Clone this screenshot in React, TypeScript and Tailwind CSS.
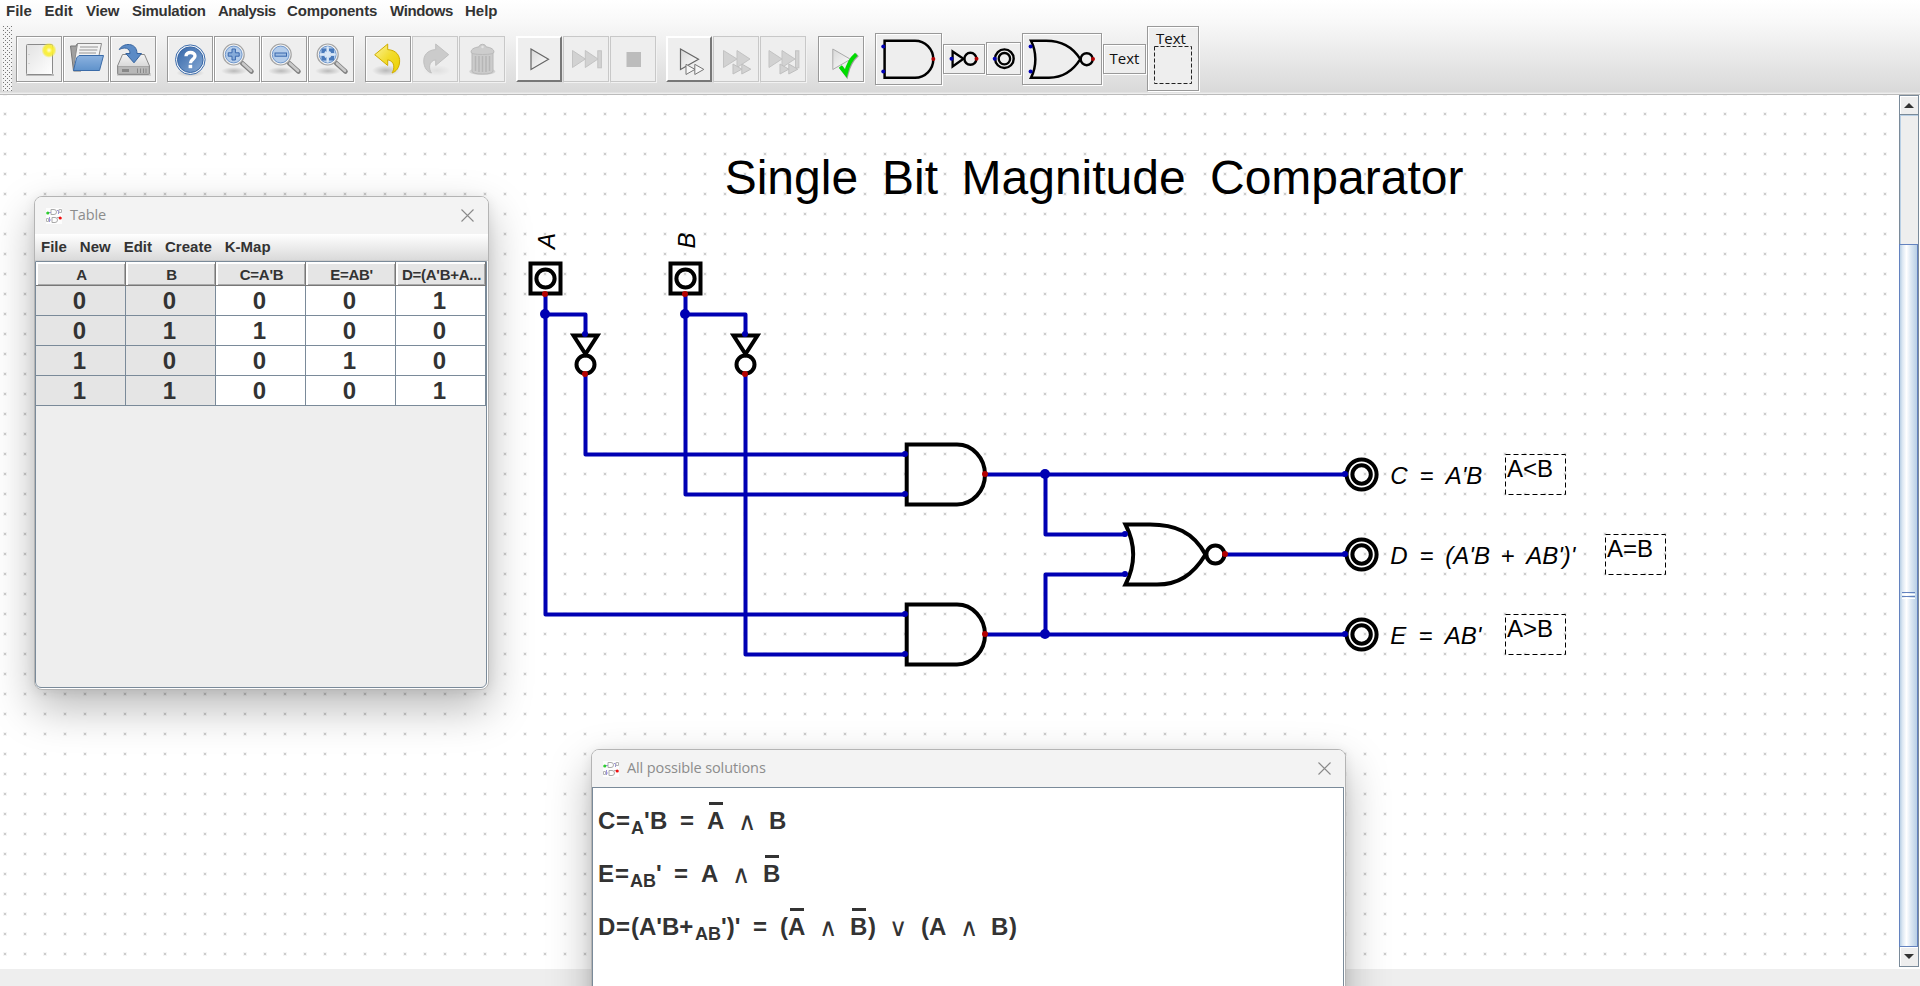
import React from "react";

const BLUE = "#0000b3";
const RED = "#b30000";

/* ---------- toolbar ---------- */

type Kind = "normal" | "disabled" | "raised";

const frames: Record<Kind, string> = {
  normal: "border border-[#999] shadow-[1px_1px_0_#fff,inset_1px_1px_0_#fff]",
  disabled: "border border-[#c8c8c8] shadow-[1px_1px_0_#f2f2f2]",
  raised: "border-2 border-t-white border-l-white border-r-[#777] border-b-[#777]",
};

function Tool({ kind = "normal", children }: { kind?: Kind; children: React.ReactNode }) {
  return (
    <div className={`flex h-[46px] w-[46px] shrink-0 items-center justify-center bg-[#eee] ${frames[kind]}`}>
      <svg className="h-11 w-11 shrink-0" viewBox="1 1 44 44">
        {children}
      </svg>
    </div>
  );
}

function Defs() {
  return (
    <svg className="absolute h-0 w-0">
      <defs>
        <linearGradient id="paper" x1="0" y1="0" x2="1" y2="1">
          <stop offset="0" stopColor="#e2e2e2" />
          <stop offset="1" stopColor="#ffffff" />
        </linearGradient>
        <radialGradient id="sun">
          <stop offset="0" stopColor="#ffffe0" />
          <stop offset="0.4" stopColor="#fbf03a" />
          <stop offset="0.7" stopColor="#f7ec30" stopOpacity="0.85" />
          <stop offset="1" stopColor="#f7ec30" stopOpacity="0" />
        </radialGradient>
        <linearGradient id="folder" x1="0" y1="0" x2="0" y2="1">
          <stop offset="0" stopColor="#8cb2df" />
          <stop offset="1" stopColor="#5f92cb" />
        </linearGradient>
        <linearGradient id="metal" x1="0" y1="0" x2="0" y2="1">
          <stop offset="0" stopColor="#f4f4f4" />
          <stop offset="1" stopColor="#c6c6c6" />
        </linearGradient>
        <linearGradient id="help" x1="0" y1="0" x2="1" y2="1">
          <stop offset="0" stopColor="#3566a8" />
          <stop offset="1" stopColor="#86a9d4" />
        </linearGradient>
        <linearGradient id="gold" x1="0" y1="0" x2="1" y2="1">
          <stop offset="0" stopColor="#fbf3a0" />
          <stop offset="0.5" stopColor="#f2dc2c" />
          <stop offset="1" stopColor="#ecd000" />
        </linearGradient>
        <radialGradient id="soft">
          <stop offset="0" stopColor="#000" stopOpacity="0.22" />
          <stop offset="1" stopColor="#000" stopOpacity="0" />
        </radialGradient>
        <linearGradient id="tri" x1="0" y1="0" x2="1" y2="1">
          <stop offset="0" stopColor="#d8d8d8" />
          <stop offset="1" stopColor="#ffffff" />
        </linearGradient>
      </defs>
    </svg>
  );
}

function Lens({ children }: { children: React.ReactNode }) {
  return (
    <>
      <ellipse cx="20" cy="35" rx="13" ry="4" fill="url(#soft)" />
      <path d="M28 27 L37.5 35.5" stroke="#808080" strokeWidth="4.6" strokeLinecap="round" />
      <path d="M29 27.5 L37 34.8" stroke="#cacaca" strokeWidth="2.6" strokeLinecap="round" />
      <circle cx="19.7" cy="18.5" r="10.5" fill="#f4f4f4" stroke="#a4a4a4" strokeWidth="1.2" />
      <circle cx="19.7" cy="18.5" r="8.4" fill="#b5cdea" stroke="#6f97cc" strokeWidth="1" />
      {children}
    </>
  );
}

const undoPath =
  "M9.7 18.7 L22.7 8 V13.6 C31 14 35.2 19.5 34.6 26 C34.2 31.5 31.5 35.5 27 37 C30 32.5 29.8 25 22.7 23.8 V29.5 Z";

function PartButton({ w, h, children }: { w: string; h: string; children: React.ReactNode }) {
  return (
    <div
      className={`${w} ${h} flex shrink-0 items-center justify-center border border-[#999] bg-[#eee] shadow-[1px_1px_0_#fff,inset_1px_1px_0_#fff]`}
    >
      {children}
    </div>
  );
}

function Dot({ x, y, c, r = 2 }: { x: number; y: number; c: string; r?: number }) {
  return <circle cx={x} cy={y} r={r} fill={c} />;
}

function Toolbar() {
  return (
    <div className="flex h-[65px] items-center pl-[2px]">
      <svg className="h-[65px] w-[11px] shrink-0">
        <defs>
          <pattern id="grip" width="4" height="4" patternUnits="userSpaceOnUse">
            <rect width="4" height="4" fill="#f4f4f4" />
            <rect x="1" y="0" width="1" height="1" fill="#777" />
            <rect x="3" y="2" width="1" height="1" fill="#777" />
          </pattern>
        </defs>
        <rect width="10" height="65" fill="url(#grip)" />
      </svg>
      <div className="ml-[3px] flex items-center gap-px">
        <Tool>
          <rect x="10" y="38" width="28" height="2" fill="#000" opacity="0.2" />
          <rect x="10.5" y="8.5" width="26" height="30" rx="1" fill="url(#paper)" stroke="#8a8a8a" />
          <path d="M13 18 v1 M13 27 v1" stroke="#bbb" />
          <circle cx="33" cy="14.3" r="7.6" fill="url(#sun)" />
        </Tool>
        <Tool>
          <path d="M7.5 10 H13 L14 8 H18 V35 H10.5 Z" fill="#a0a0a0" stroke="#777" />
          <path d="M14.5 7.5 H38.5 L34 29 H11 Z" fill="#f3f3f3" stroke="#8a8a8a" />
          <path d="M17 11 H35 M16.3 14 H34.3 M16 17 H33" stroke="#b5b5b5" strokeWidth="1.3" />
          <path d="M16 19.5 H40.5 L36.5 34.5 H10.5 L13.5 22 Z" fill="url(#folder)" stroke="#3a6ba8" />
        </Tool>
        <Tool>
          <rect x="7" y="37" width="34" height="3" fill="#000" opacity="0.12" />
          <path d="M12.5 18.5 H34.5 L39.5 30 V37.5 Q39.5 38.5 38.5 38.5 H8.5 Q7.5 38.5 7.5 37.5 V30 Z" fill="url(#metal)" stroke="#888" />
          <path d="M8 30.5 H39 V37 Q39 38 38 38 H9 Q8 38 8 37 Z" fill="#b8b8b8" stroke="#999" strokeWidth="0.7" />
          <path d="M12 34.5 H19" stroke="#888" strokeWidth="3" />
          <path d="M27.5 32.5 V37 M30.5 32.5 V37 M33.5 32.5 V37 M36 32.5 V37" stroke="#8a8a8a" strokeWidth="1" />
          <path d="M9.3 13.5 C13 6.5 27 6 27 17.5 H31.5 L24 26.8 L15.8 17.5 H20 C20 11.5 14 11 9.3 13.5 Z" fill="#5b8bc6" stroke="#35639f" />
        </Tool>
      </div>
      <div className="ml-[11px] flex items-center gap-px">
        <Tool>
          <ellipse cx="23.3" cy="37" rx="14" ry="4" fill="url(#soft)" />
          <circle cx="23.3" cy="23.7" r="14.8" fill="#f2f5f9" stroke="#3d6cab" />
          <circle cx="23.3" cy="23.7" r="12.8" fill="url(#help)" stroke="#3766a6" />
          <path d="M19 20.3 C19 15.3 28 15.2 28 20 C28 23.4 23.4 23.3 23.4 27.2" fill="none" stroke="#fff" strokeWidth="3.4" />
          <rect x="21.6" y="28.8" width="3.6" height="3.4" fill="#fff" />
        </Tool>
        <Tool>
          <Lens>
            <path d="M18 13 h3.4 v3.8 h3.8 v3.4 h-3.8 v3.8 h-3.4 v-3.8 h-3.8 v-3.4 h3.8 z" fill="#86abd9" stroke="#3a69ae" />
          </Lens>
        </Tool>
        <Tool>
          <Lens>
            <rect x="14" y="17" width="11.5" height="3.2" fill="#9dbce3" stroke="#3a69ae" />
          </Lens>
        </Tool>
        <Tool>
          <Lens>
            <path d="M13.5 12.5 h5 v4.6 h-5 z M21 12.5 h5 v4.6 h-5 z M13.5 20 h5 v4.6 h-5 z M21 20 h5 v4.6 h-5 z" fill="#4a7abb" />
            <path d="M19.7 10.5 V26.5 M11.7 18.5 H27.7" stroke="#dbe8f6" strokeWidth="2" />
            <path d="M17 15.8 l5.4 5.4 M22.4 15.8 l-5.4 5.4" stroke="#dbe8f6" strokeWidth="2" />
          </Lens>
        </Tool>
      </div>
      <div className="ml-[11px] flex items-center gap-px">
        <Tool>
          <ellipse cx="21" cy="34.5" rx="14" ry="5.5" fill="url(#soft)" />
          <path d={undoPath} fill="url(#gold)" stroke="#d0ac00" strokeLinejoin="round" />
        </Tool>
        <Tool kind="disabled">
          <ellipse cx="25" cy="34.5" rx="14" ry="5.5" fill="url(#soft)" opacity="0.3" />
          <path d={undoPath} transform="translate(46.4 0) scale(-1 1)" fill="#cbcbcb" stroke="#c0c0c0" strokeLinejoin="round" />
        </Tool>
        <Tool kind="disabled">
          <ellipse cx="23.3" cy="35.5" rx="13" ry="3.5" fill="#d2d2d2" />
          <path d="M13 16 H34 V35 Q34 38 23.5 38 Q13 38 13 35 Z" fill="#cbcbcb" stroke="#b8b8b8" />
          <path d="M16.5 20 V35 M20 20 V36 M23.5 20 V36 M27 20 V36 M30.5 20 V35" stroke="#b6b6b6" strokeWidth="1.5" />
          <path d="M12 16 Q12 12 20 10.8 Q20.5 8.3 23.5 8.3 Q26.5 8.3 27 10.8 Q35 12 35 16 Q35 18.5 23.5 18.5 Q12 18.5 12 16 Z" fill="#cdcdcd" stroke="#bababa" />
          <circle cx="23.5" cy="11" r="1.2" fill="#e4e4e4" />
        </Tool>
      </div>
      <div className="ml-[11px] flex items-center gap-px">
        <Tool kind="raised">
          <path d="M15 13 L32.5 23.3 L15 33.5 Z" fill="url(#tri)" stroke="#666" strokeWidth="1.2" />
        </Tool>
        <Tool kind="disabled">
          <path d="M9.5 14.5 L22.3 23 L9.5 31.5 Z M22.3 14.5 L35 23 L22.3 31.5 Z" fill="#d2d2d2" stroke="#c3c3c3" />
          <rect x="34.8" y="14.8" width="3.6" height="17" fill="#d2d2d2" stroke="#c3c3c3" />
        </Tool>
        <Tool kind="disabled">
          <rect x="16.5" y="16" width="14.5" height="15" fill="#bcbcbc" />
        </Tool>
      </div>
      <div className="ml-[10px] flex items-center gap-px">
        <Tool kind="raised">
          <path d="M14.5 13 L32.5 23.3 L14.5 33.5 Z" fill="url(#tri)" stroke="#666" strokeWidth="1.2" />
          <path d="M20 28.3 L29 33.4 L20 38.5 Z M28.8 28.3 L37.8 33.4 L28.8 38.5 Z" fill="#f6f6f6" stroke="#777" />
        </Tool>
        <Tool kind="disabled">
          <path d="M10.5 14.5 L24 23 L10.5 31.5 Z M24 14.5 L37 23 L24 31.5 Z" fill="#d2d2d2" stroke="#c3c3c3" />
          <path d="M20 28 L28.8 33.2 L20 38 Z M28.8 28 L37.8 33.2 L28.8 38 Z" fill="#d2d2d2" stroke="#bfbfbf" />
        </Tool>
        <Tool kind="disabled">
          <path d="M9 14.5 L22 23 L9 31.5 Z M22 14.5 L35 23 L22 31.5 Z" fill="#d2d2d2" stroke="#c3c3c3" />
          <rect x="35.5" y="14.8" width="3.4" height="17" fill="#d2d2d2" stroke="#c3c3c3" />
          <path d="M20 28 L28.8 33.2 L20 38 Z M28.8 28 L37.8 33.2 L28.8 38 Z" fill="#d2d2d2" stroke="#bfbfbf" />
        </Tool>
      </div>
      <div className="ml-[12px]">
        <Tool>
          <path d="M14.8 13 L32.5 23.3 L14.8 33.5 Z" fill="url(#tri)" stroke="#aaa" />
          <path d="M23 31 L28.5 38.5 C30.5 30 35 22.5 39.5 18.8" fill="none" stroke="#666" strokeWidth="4" opacity="0.6" />
          <path d="M22.3 30.5 L27.8 37.5 C29.5 29.5 34 22 38.3 18.3" fill="none" stroke="#00dc00" strokeWidth="3.8" />
        </Tool>
      </div>
      <div className="ml-[11px] flex items-center gap-px">
        <PartButton w="w-[67px]" h="h-[52px]">
          <svg className="h-[50px] w-[65px]" viewBox="1 1 65 50">
            <path d="M40 7.7 H9.6 V44.7 H40 A18.3 18.5 0 0 0 40 7.7 Z" fill="none" stroke="#000" strokeWidth="2.5" />
            <Dot x={8.3} y={13.5} c={BLUE} />
            <Dot x={8.3} y={38.5} c={BLUE} />
            <Dot x={58.3} y={26} c={RED} />
          </svg>
        </PartButton>
        <PartButton w="w-[42px]" h="h-[30px]">
          <svg className="h-[28px] w-[40px]" viewBox="1 1 40 28">
            <path d="M9.6 7.5 L20.5 14.8 L9.6 22.5 Z" fill="none" stroke="#000" strokeWidth="2.3" />
            <circle cx="27.4" cy="14.8" r="6" fill="none" stroke="#000" strokeWidth="2.4" />
            <Dot x={8.5} y={14.8} c={BLUE} />
            <Dot x={33.5} y={14.8} c={RED} />
          </svg>
        </PartButton>
        <PartButton w="w-[35px]" h="h-[33px]">
          <svg className="h-[31px] w-[33px]" viewBox="1 1 33 31">
            <circle cx="18.4" cy="16.7" r="9.3" fill="none" stroke="#000" strokeWidth="2.4" />
            <circle cx="18.4" cy="16.7" r="5.7" fill="none" stroke="#000" strokeWidth="2.3" />
            <Dot x={8.7} y={16.7} c={BLUE} />
          </svg>
        </PartButton>
        <PartButton w="w-[80px]" h="h-[52px]">
          <svg className="h-[50px] w-[78px]" viewBox="1 1 78 50">
            <path d="M9 7.7 H24 C38 7.7 50 12.5 58.3 26.2 C50 39.5 40 44.7 27 44.7 H9 C14.8 33.5 14.8 19 9 7.7 Z" fill="none" stroke="#000" strokeWidth="2.5" />
            <circle cx="64.7" cy="26.2" r="6" fill="none" stroke="#000" strokeWidth="2.4" />
            <Dot x={8.6} y={13.5} c={BLUE} />
            <Dot x={8.6} y={38.5} c={BLUE} />
            <Dot x={71} y={26} c={RED} />
          </svg>
        </PartButton>
        <PartButton w="w-[43px]" h="h-[30px]">
          <span className="font-['Open_Sans',sans-serif] text-[15px] leading-none text-[#111]">Text</span>
        </PartButton>
        <PartButton w="w-[52px]" h="h-[65px]">
          <div className="flex h-full w-full flex-col pl-[6px] pt-[3px]">
            <span className="h-[15px] pl-[2px] font-['Open_Sans',sans-serif] text-[15px] leading-[16px] text-[#111]">Text</span>
            <svg className="h-[40px] w-[40px]">
              <rect x="0.5" y="1.5" width="37" height="37" fill="none" stroke="#222" strokeDasharray="4 2" />
            </svg>
          </div>
        </PartButton>
      </div>
    </div>
  );
}

/* ---------- schematic ---------- */

function Inverter({ x }: { x: number }) {
  return (
    <g>
      <path d={`M${x - 12} 335.5 H${x + 12} L${x} 354 Z`} fill="none" stroke="#000" strokeWidth="4" />
      <circle cx={x} cy="364.5" r="9" fill="none" stroke="#000" strokeWidth="4" />
      <Dot x={x - 0.5} y={334} c={BLUE} r={3} />
      <Dot x={x - 0.5} y={374} c={RED} r={3} />
    </g>
  );
}

function Input({ x }: { x: number }) {
  return (
    <g>
      <rect x={x - 15} y="263.5" width="30" height="30" fill="none" stroke="#000" strokeWidth="4" />
      <circle cx={x} cy="278.5" r="9.1" fill="none" stroke="#000" strokeWidth="4" />
      <Dot x={x - 0.5} y={294} c={RED} r={3} />
      <Dot x={x - 0.5} y={314} c={BLUE} r={5} />
    </g>
  );
}

function And({ y }: { y: number }) {
  return (
    <g>
      <path
        d={`M957 ${y - 30} H906.7 V${y + 30} H957 A28 30 0 0 0 957 ${y - 30} Z`}
        fill="none"
        stroke="#000"
        strokeWidth="4"
      />
      <Dot x={905} y={y - 20.5} c={BLUE} r={3} />
      <Dot x={905} y={y + 19.5} c={BLUE} r={3} />
      <Dot x={985} y={y - 0.5} c={RED} r={3} />
    </g>
  );
}

function Output({ y }: { y: number }) {
  return (
    <g>
      <circle cx="1361.6" cy={y} r="15" fill="none" stroke="#000" strokeWidth="4" />
      <circle cx="1361.6" cy={y} r="9.2" fill="none" stroke="#000" strokeWidth="4" />
      <Dot x={1345} y={y - 0.5} c={BLUE} r={3} />
    </g>
  );
}

function BoxedText({ x, y, children }: { x: number; y: number; children: string }) {
  return (
    <g>
      <rect x={x + 0.5} y={y + 0.5} width="60" height="40" fill="none" stroke="#000" strokeDasharray="5 3" />
      <text x={x + 2} y={y + 23} fontSize="24">
        {children}
      </text>
    </g>
  );
}

function Schematic() {
  return (
    <svg className="h-[874px] w-[1899px] shrink-0 font-['Liberation_Sans',sans-serif]" viewBox="0 95 1899 874">
      <defs>
        <pattern id="dots" x="-5" y="4" width="20" height="20" patternUnits="userSpaceOnUse">
          <rect x="8" y="8" width="4" height="4" fill="#f5f5f5" />
          <rect x="9" y="9" width="2" height="2" fill="#ccc" />
        </pattern>
      </defs>
      <rect y="95" width="1899" height="874" fill="url(#dots)" />
      <g fontSize="48" fill="#000">
        <text y="194">
          <tspan x="724.7">Single </tspan>
          <tspan x="882">Bit </tspan>
          <tspan x="961.5">Magnitude </tspan>
          <tspan x="1210">Comparator</tspan>
        </text>
      </g>
      <g fill="none" stroke={BLUE} strokeWidth="4" strokeLinejoin="round" strokeLinecap="round">
        <path d="M545.5 294 V614.5 H905 M545.5 314.5 H585.5 V334 M585.5 374 V454.5 H905" />
        <path d="M685.5 294 V494.5 H905 M685.5 314.5 H745.5 V334 M745.5 374 V654.5 H905" />
        <path d="M985 474.5 H1345 M1045.5 474.5 V534.5 H1125" />
        <path d="M985 634.5 H1345 M1045.5 634.5 V574.5 H1125 M1225 554.5 H1345" />
      </g>
      <Input x={545.5} />
      <Input x={685.5} />
      <Inverter x={585.5} />
      <Inverter x={745.5} />
      <And y={474.5} />
      <And y={634.5} />
      <Dot x={1045} y={474} c={BLUE} r={5} />
      <Dot x={1045} y={634} c={BLUE} r={5} />
      <path
        d="M1125.5 524.5 H1150 C1175 524.5 1193 532 1205.5 554.5 C1193 575 1178 584.5 1157 584.5 H1125.5 C1135.5 565 1135.5 544 1125.5 524.5 Z"
        fill="none"
        stroke="#000"
        strokeWidth="4"
      />
      <circle cx="1215.4" cy="554.5" r="9" fill="none" stroke="#000" strokeWidth="4" />
      <Dot x={1125} y={534} c={BLUE} r={3} />
      <Dot x={1125} y={574} c={BLUE} r={3} />
      <Dot x={1225} y={554} c={RED} r={3} />
      <Output y={474.5} />
      <Output y={554.5} />
      <Output y={634.5} />
      <g fontSize="24" fontStyle="italic" fill="#000">
        <text transform="translate(555 249) rotate(-90)">A</text>
        <text transform="translate(695 248.5) rotate(-90)">B</text>
        <text y="484">
          <tspan x="1390.3">C </tspan>
          <tspan x="1419.5">= </tspan>
          <tspan x="1445.7">A'B</tspan>
        </text>
        <text y="564">
          <tspan x="1390.3">D </tspan>
          <tspan x="1419.5">= </tspan>
          <tspan x="1445.3">(A'B </tspan>
          <tspan x="1500.5">+ </tspan>
          <tspan x="1526.2">AB')'</tspan>
        </text>
        <text y="644">
          <tspan x="1390.3">E </tspan>
          <tspan x="1418.5">= </tspan>
          <tspan x="1444.7">AB'</tspan>
        </text>
      </g>
      <BoxedText x={1505} y={454}>{"A<B"}</BoxedText>
      <BoxedText x={1605} y={534}>{"A=B"}</BoxedText>
      <BoxedText x={1505} y={614}>{"A>B"}</BoxedText>
    </svg>
  );
}

function ScrollBar() {
  return (
    <div className="flex h-[872px] w-5 flex-col border border-[#7a8a99] bg-[#eee]">
      <div className="flex h-[19px] shrink-0 items-center justify-center border-b border-[#7a8a99] shadow-[inset_1px_1px_0_#fff]">
        <svg className="h-[5px] w-[10px]">
          <path d="M0 5 L5 0 L10 5 Z" fill="#333" />
        </svg>
      </div>
      <div className="h-[129px] shrink-0 border-l border-t border-[#b8cfe5]" />
      <div className="-ml-px flex flex-1 items-center justify-center border border-[#6382bf] bg-[linear-gradient(90deg,#b8cfe5_0,#dde8f3_15%,#fff_38%,#dbe7f3_65%,#b8cfe5_100%)]">
        <div className="flex w-[13px] flex-col gap-px">
          <div className="h-px bg-[#6382bf]" />
          <div className="h-px bg-white" />
          <div className="h-px bg-[#6382bf]" />
          <div className="h-px bg-white" />
        </div>
      </div>
      <div className="flex h-[19px] shrink-0 items-center justify-center shadow-[inset_1px_1px_0_#fff]">
        <svg className="h-[5px] w-[10px]">
          <path d="M0 0 L5 5 L10 0 Z" fill="#333" />
        </svg>
      </div>
    </div>
  );
}

/* ---------- windows ---------- */

function TitleBar({ title }: { title: string }) {
  return (
    <div className="flex h-[37px] shrink-0 items-center bg-[#f3f3f3] pl-[11px] pr-[14px]">
      <svg className="h-4 w-4" viewBox="0 0 16 16">
        <rect width="16" height="16" fill="#fff" opacity="0.8" />
        <path d="M5 1.5 H8 Q10.5 1.5 10.5 4 Q10.5 6.5 8 6.5 H5 Z M6 9.5 H9 Q11.5 9.5 11.5 12 Q11.5 14.5 9 14.5 H6 Z" fill="none" stroke="#aaa" />
        <path d="M2 4.5 H5 M11 2.5 H12.5 V6 M2 12 H5 M3.5 9 V14" fill="none" stroke="#9a92dc" />
        <path d="M13 1.5 H15.5 V4.5 H13 Z M0.5 10.5 H2.5 V13.5 H0.5 Z M11 9.5 H14" fill="none" stroke="#b4b4b4" />
        <circle cx="1.8" cy="5" r="1.6" fill="#2ecc2e" />
        <circle cx="14.2" cy="10" r="1.6" fill="#f01010" />
      </svg>
      <span className="ml-2 font-['Open_Sans',sans-serif] text-[14.5px] leading-none tracking-[-0.12px] text-[#8c8c8c]">{title}</span>
      <svg className="ml-auto h-[13px] w-[13px]" viewBox="0 0 13 13">
        <path d="M0.5 0.5 L12.5 12.5 M12.5 0.5 L0.5 12.5" stroke="#8a8a8a" strokeWidth="1.1" />
      </svg>
    </div>
  );
}

const headers = ["A", "B", "C=A'B", "E=AB'", "D=(A'B+A..."];
const rows = ["00001", "01100", "10010", "11001"];

function TableWindow() {
  return (
    <div className="absolute left-[34px] top-[196px] flex h-[494px] w-[455px] flex-col overflow-hidden rounded-lg border border-[#b4b4b4] bg-white shadow-[0_18px_44px_rgba(0,0,0,0.28),0_2px_12px_rgba(0,0,0,0.08)]">
      <TitleBar title="Table" />
      <div className="flex h-[27px] shrink-0 gap-[13px] border-b border-[#ccc] bg-gradient-to-b from-white to-[#dadada] pl-[6px] text-[15px] font-bold leading-[25px] text-[#333]">
        <span>File</span>
        <span>New</span>
        <span>Edit</span>
        <span>Create</span>
        <span>K-Map</span>
      </div>
      <div className="mr-px mb-px flex flex-1 flex-col rounded-b-md border border-[#7a8a99] bg-[#eee] text-[#333]">
        <div className="grid h-6 shrink-0 grid-cols-[repeat(5,90px)] border-b border-[#777]">
          {headers.map((h) => (
            <div
              key={h}
              className="flex items-center justify-center whitespace-nowrap border-r border-[#777] bg-[#e5e5e5] pl-[2px] pt-px text-[15px] font-bold leading-none tracking-[-0.25px] shadow-[inset_2px_2px_0_#fff,inset_-1px_-1px_0_#aaa]"
            >
              {h}
            </div>
          ))}
        </div>
        {rows.map((r) => (
          <div key={r} className="grid h-[30px] shrink-0 grid-cols-[repeat(5,90px)]">
            {r.split("").map((v, i) => (
              <div
                key={i}
                className={`flex items-center justify-center border-b border-r border-[#7a8a99] pr-[2px] text-[24px] font-bold leading-none ${i < 2 ? "bg-[#e5e5e5]" : "bg-white"}`}
              >
                {v}
              </div>
            ))}
          </div>
        ))}
      </div>
    </div>
  );
}

type Token = { t: string; w: string; k?: "sub" | "bar" | "op" };

const formulas: Token[][] = [
  [
    { t: "C", w: "w-[18px]" },
    { t: "=", w: "w-[15px]" },
    { t: "A", w: "w-[13px]", k: "sub" },
    { t: "'", w: "w-[6px]" },
    { t: "B", w: "w-[30px]" },
    { t: "=", w: "w-[27px]" },
    { t: "A", w: "w-[31px]", k: "bar" },
    { t: "∧", w: "w-[31px]", k: "op" },
    { t: "B", w: "w-[18px]" },
  ],
  [
    { t: "E", w: "w-[17px]" },
    { t: "=", w: "w-[15px]" },
    { t: "AB", w: "w-[26px]", k: "sub" },
    { t: "'", w: "w-[18px]" },
    { t: "=", w: "w-[27px]" },
    { t: "A", w: "w-[31px]" },
    { t: "∧", w: "w-[31px]", k: "op" },
    { t: "B", w: "w-[18px]", k: "bar" },
  ],
  [
    { t: "D", w: "w-[18px]" },
    { t: "=", w: "w-[15px]" },
    { t: "(A'B+", w: "w-[64px]" },
    { t: "AB", w: "w-[26px]", k: "sub" },
    { t: "')'", w: "w-[32px]" },
    { t: "=", w: "w-[27px]" },
    { t: "(", w: "w-[8px]" },
    { t: "A", w: "w-[31px]", k: "bar" },
    { t: "∧", w: "w-[31px]", k: "op" },
    { t: "B", w: "w-[18px]", k: "bar" },
    { t: ")", w: "w-[21px]" },
    { t: "∨", w: "w-[32px]", k: "op" },
    { t: "(", w: "w-[8px]" },
    { t: "A", w: "w-[31px]" },
    { t: "∧", w: "w-[31px]", k: "op" },
    { t: "B", w: "w-[18px]" },
    { t: ")", w: "w-[8px]" },
  ],
];

function Formula({ tokens }: { tokens: Token[] }) {
  return (
    <div className="flex h-[53px] items-center whitespace-nowrap text-[24px] font-bold leading-[28px] text-[#333]">
      {tokens.map((k, i) => (
        <span key={i} className={`${k.w} shrink-0`}>
          {k.k === "sub" && <span className="block pt-[15px] text-[18px]">{k.t}</span>}
          {k.k === "op" && <span className="block pt-[2px] font-['DejaVu_Sans',sans-serif] text-[25px] font-normal">{k.t}</span>}
          {k.k === "bar" && (
            <span className="relative">
              {k.t}
              <span className="absolute left-[2px] top-[-5px] h-[3px] w-[14px] bg-[#333]" />
            </span>
          )}
          {!k.k && k.t}
        </span>
      ))}
    </div>
  );
}

function SolutionsWindow() {
  return (
    <div className="absolute left-[591px] top-[749px] flex h-[300px] w-[755px] flex-col overflow-hidden rounded-t-lg border border-[#b4b4b4] bg-white shadow-[0_18px_44px_rgba(0,0,0,0.28),0_2px_12px_rgba(0,0,0,0.08)]">
      <TitleBar title="All possible solutions" />
      <div className="mr-px flex flex-1 flex-col border border-[#7a8a99] bg-white pl-[5px] pt-[6px]">
        {formulas.map((f, i) => (
          <Formula key={i} tokens={f} />
        ))}
      </div>
    </div>
  );
}

export default function App() {
  return (
    <div className="relative flex h-[986px] w-[1920px] flex-col overflow-hidden bg-[#eee] font-['Liberation_Sans',Arial,sans-serif]">
      <Defs />
      <header className="flex h-[95px] shrink-0 flex-col border-b border-[#bbb] bg-[linear-gradient(180deg,#fff_0,#f8f8f8_25%,#d9d9d9_98%,#eee_99%)]">
        <nav className="flex h-[26px] shrink-0 pl-[6px] text-[15px] font-bold leading-[22px] text-[#333]">
          <span className="w-[38.5px]">File</span>
          <span className="w-[41.5px]">Edit</span>
          <span className="w-[46px] tracking-[-0.2px]">View</span>
          <span className="w-[86px] tracking-[-0.3px]">Simulation</span>
          <span className="w-[69px] tracking-[-0.5px]">Analysis</span>
          <span className="w-[103px] tracking-[-0.15px]">Components</span>
          <span className="w-[75px] tracking-[-0.4px]">Windows</span>
          <span>Help</span>
        </nav>
        <Toolbar />
      </header>
      <main className="flex h-[874px] shrink-0 bg-white">
        <Schematic />
        <ScrollBar />
      </main>
      <TableWindow />
      <SolutionsWindow />
    </div>
  );
}
